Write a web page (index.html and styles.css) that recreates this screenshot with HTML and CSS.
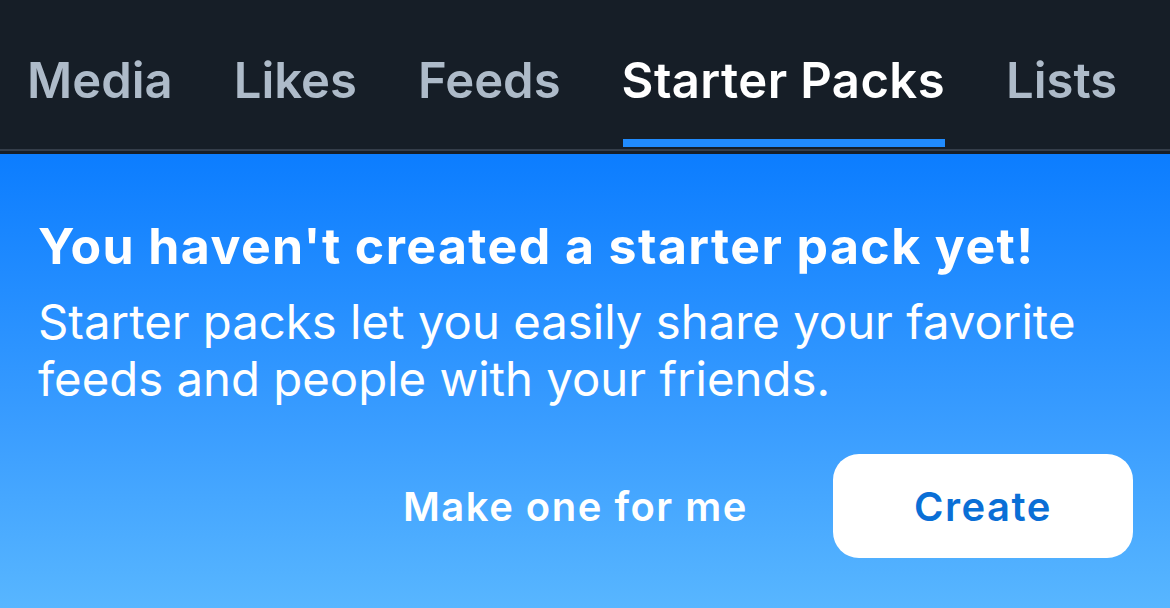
FILE: index.html
```html
<!DOCTYPE html>
<html>
<head>
<meta charset="utf-8">
<link rel="stylesheet" href="styles.css">
</head>
<body>
<div class="screen">
  <header class="header">
    <nav class="tabs">
      <div class="tab"><span class="label">Media</span><span class="bar"></span></div>
      <div class="tab"><span class="label">Likes</span><span class="bar"></span></div>
      <div class="tab"><span class="label">Feeds</span><span class="bar"></span></div>
      <div class="tab active"><span class="label">Starter Packs</span><span class="bar"></span></div>
      <div class="tab"><span class="label">Lists</span><span class="bar"></span></div>
    </nav>
  </header>
  <section class="panel">
    <h1 class="title">You haven't created a starter pack yet!</h1>
    <p class="desc">Starter packs let you easily share your favorite feeds and people with your friends.</p>
    <div class="actions">
      <button class="btn ghost">Make one for me</button>
      <button class="btn solid">Create</button>
    </div>
  </section>
</div>
</body>
</html>
```

FILE: styles.css
```css
* { box-sizing: border-box; }
html, body { margin: 0; padding: 0; }
body {
  width: 1170px;
  height: 608px;
  overflow: hidden;
  font-family: Inter, "Noto Sans", sans-serif;
  background: #161e27;
}
.screen {
  display: flex;
  flex-direction: column;
  height: 608px;
}
.header {
  background: #161e27;
  padding-bottom: 3px;
}
.tabs {
  display: flex;
  gap: 61px;
  padding-left: 27px;
  height: 151px;
  border-bottom: 2px solid #343d49;
}
.tab {
  display: flex;
  flex-direction: column;
  padding-top: 52px;
}
.label {
  font-size: 49px;
  line-height: 58px;
  font-weight: 600;
  color: #aebbc9;
  white-space: nowrap;
}
.bar {
  display: block;
  height: 8px;
  margin-top: 29px;
}
.tab.active .label { color: #ffffff; letter-spacing: 0.4px; }
.tab.active .bar { background: #208bfe; margin-left: 1px; margin-right: 0; }
.panel {
  flex: 1;
  background: linear-gradient(180deg, #0c7dff 0%, #3a9dff 60%, #58b6ff 100%);
  padding: 62px 37px 0 38px;
  color: #ffffff;
}
.title {
  margin: 0;
  font-size: 50px;
  line-height: 61px;
  font-weight: 700;
  letter-spacing: 1.4px;
}
.desc {
  margin: 16px 0 0;
  font-size: 47.3px;
  line-height: 57px;
  font-weight: 400;
}
.actions {
  display: flex;
  justify-content: flex-end;
  align-items: center;
  margin-top: 47px;
}
.btn {
  font-family: Inter, "Noto Sans", sans-serif;
  font-size: 40px;
  font-weight: 600;
  letter-spacing: 1.5px;
  height: 104px;
  border: none;
  border-radius: 26px;
  cursor: pointer;
}
.btn.ghost {
  background: transparent;
  color: #ffffff;
  padding: 0 85px 0 0;
}
.btn.solid {
  background: #ffffff;
  color: #0a6fd6;
  width: 300px;
}
```
